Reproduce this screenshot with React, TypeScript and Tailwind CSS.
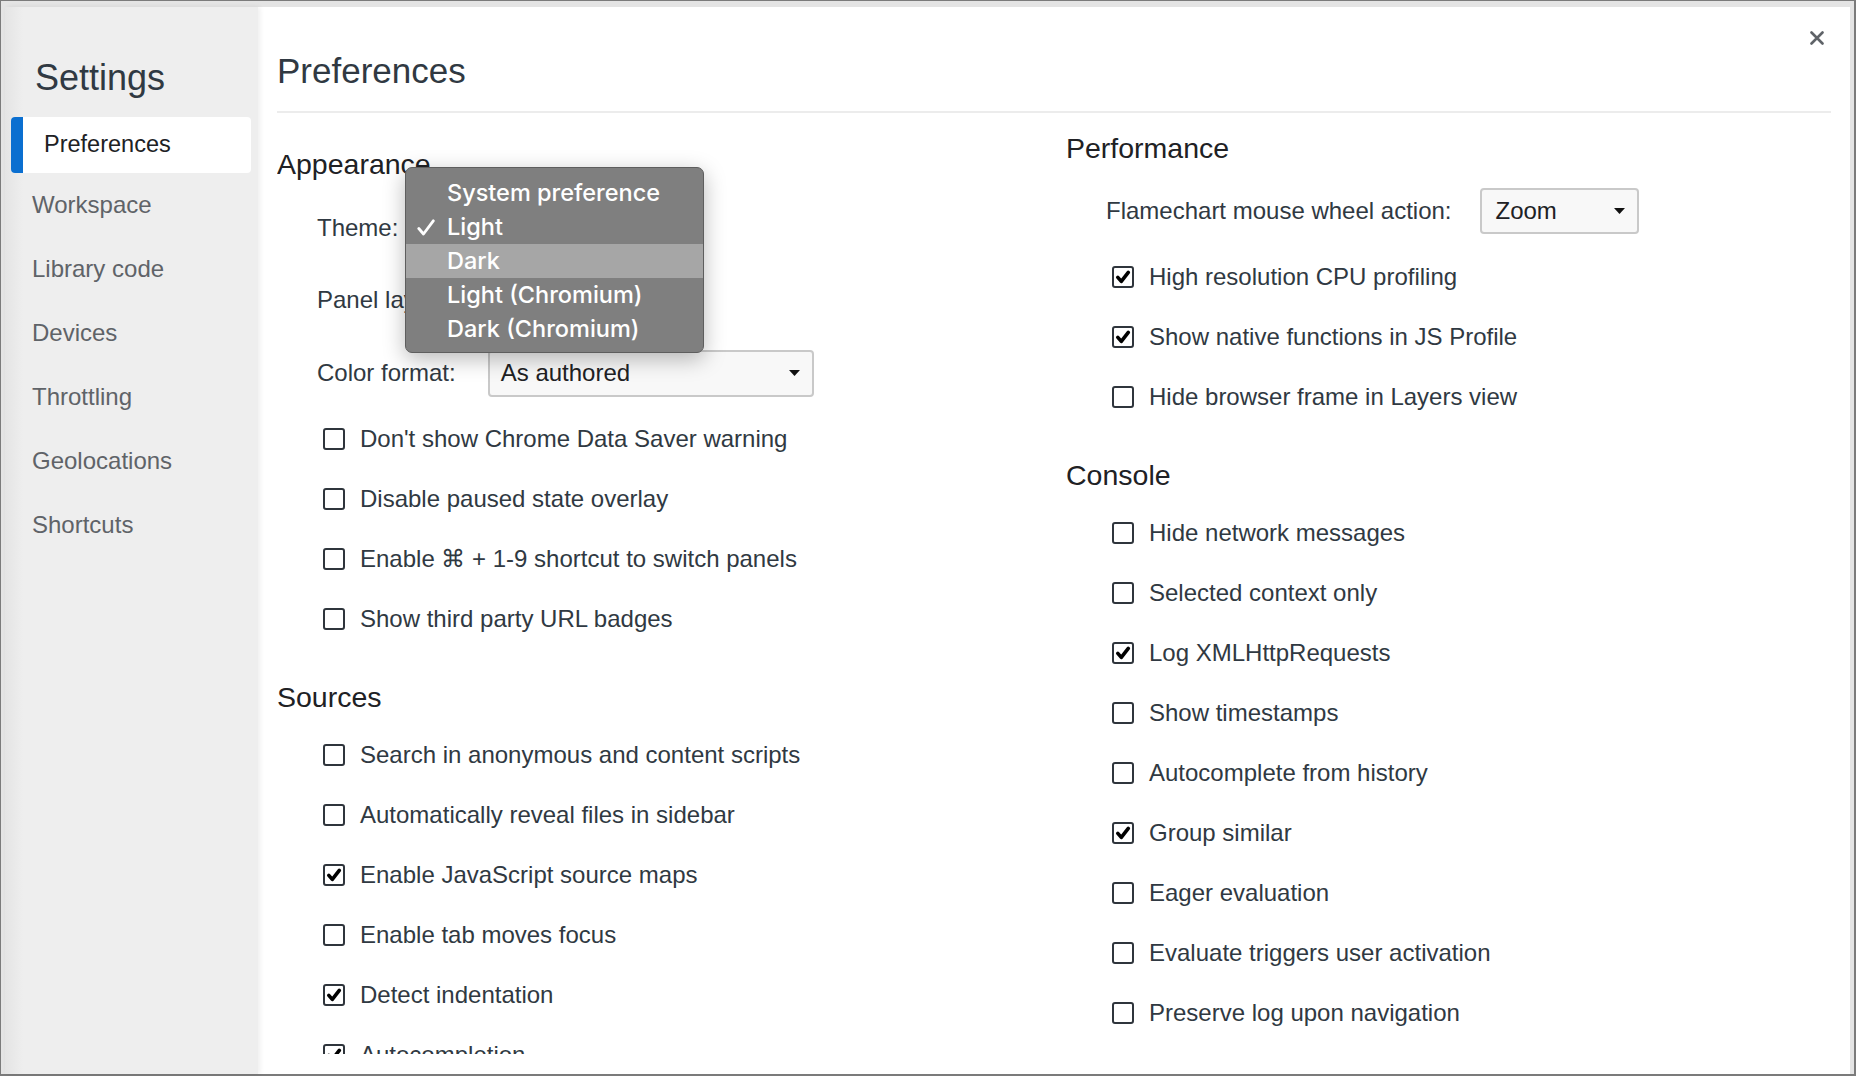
import React from "react";

function Box({ checked }: { checked?: boolean }) {
  return (
    <span className="flex h-[22px] w-[22px] shrink-0 items-center justify-center rounded-[3px] border-2 border-[#2f353c] bg-white">
      {checked && (
        <svg width="16" height="16" viewBox="0 0 16 16">
          <path
            d="M2.8 8.4 L6.3 12.4 L13.3 3.4"
            fill="none"
            stroke="#000"
            strokeWidth="3.6"
            strokeLinecap="round"
            strokeLinejoin="round"
          />
        </svg>
      )}
    </span>
  );
}

function CheckRow({ label, checked }: { label: string; checked?: boolean }) {
  return (
    <div className="flex h-[60px] items-center pl-[46px]">
      <Box checked={checked} />
      <span className="ml-[15px] whitespace-nowrap text-[24px] leading-none text-[#303942]">{label}</span>
    </div>
  );
}

function Arrow() {
  return (
    <svg width="11" height="6" viewBox="0 0 11 6" className="absolute right-[12px] top-1/2 -translate-y-1/2">
      <path d="M0 0 H11 L5.5 6 Z" fill="#111" />
    </svg>
  );
}

function Heading({ children }: { children: React.ReactNode }) {
  return <div className="flex h-[40px] items-center text-[28.5px] leading-none text-[#202124]">{children}</div>;
}

const leftRows1: [string, boolean][] = [
  ["Don't show Chrome Data Saver warning", false],
  ["Disable paused state overlay", false],
  ["Enable \u2318 + 1-9 shortcut to switch panels", false],
  ["Show third party URL badges", false],
];

const sourcesRows: [string, boolean][] = [
  ["Search in anonymous and content scripts", false],
  ["Automatically reveal files in sidebar", false],
  ["Enable JavaScript source maps", true],
  ["Enable tab moves focus", false],
  ["Detect indentation", true],
  ["Autocompletion", true],
];

const perfRows: [string, boolean][] = [
  ["High resolution CPU profiling", true],
  ["Show native functions in JS Profile", true],
  ["Hide browser frame in Layers view", false],
];

const consoleRows: [string, boolean][] = [
  ["Hide network messages", false],
  ["Selected context only", false],
  ["Log XMLHttpRequests", true],
  ["Show timestamps", false],
  ["Autocomplete from history", false],
  ["Group similar", true],
  ["Eager evaluation", false],
  ["Evaluate triggers user activation", false],
  ["Preserve log upon navigation", false],
];

const navItems = ["Workspace", "Library code", "Devices", "Throttling", "Geolocations", "Shortcuts"];

const menuItems = ["System preference", "Light", "Dark", "Light (Chromium)", "Dark (Chromium)"];

export default function App() {
  return (
    <div className="h-[1076px] w-[1856px] overflow-hidden bg-[#7b7b7b] pb-[2px] pl-px pr-[2px] pt-px font-['Liberation_Sans',Arial,sans-serif]">
      <div className="h-full bg-[#e4e4e4] pl-[4px] pr-[4px] pt-[6px]">
        <div className="flex h-full bg-white">
          {/* Sidebar */}
          <aside className="relative z-10 w-[253px] shrink-0 bg-[linear-gradient(to_right,#e4e4e4,#eeeeee_18px)] pt-[47px] shadow-[2px_0_5px_rgba(0,0,0,0.07)]">
            <div className="flex h-[48px] items-center pl-[30px] text-[36px] leading-none text-[#303942]">Settings</div>
            <div className="ml-[6px] mr-[7px] mt-[15px] flex h-[56px] items-center overflow-hidden rounded-[4px] bg-white">
              <div className="h-full w-[12px] bg-[#0b6fd0]" />
              <span className="pl-[21px] text-[23.5px] leading-none text-[#202124]">Preferences</span>
            </div>
            {navItems.map((n) => (
              <div key={n} className="flex h-[64px] items-center pl-[27px] text-[24px] leading-none text-[#5f6368]">
                {n}
              </div>
            ))}
          </aside>

          {/* Main */}
          <main className="relative flex min-w-0 flex-1 flex-col pl-[19px] pr-[19px]">
            <button className="absolute right-[26px] top-[24px] h-[14px] w-[14px]">
              <svg width="14" height="14" viewBox="0 0 14 14">
                <path d="M1.5 1.5 L12.5 12.5 M12.5 1.5 L1.5 12.5" stroke="#5f6368" strokeWidth="2.6" strokeLinecap="round" />
              </svg>
            </button>
            <div className="mt-[39px] flex h-[48px] items-center text-[35px] leading-none text-[#303942]">Preferences</div>
            <div className="mt-[17px] h-[2px] bg-[#ececec]" />

            <div className="flex h-[941px] overflow-hidden">
              {/* Left column */}
              <div className="relative w-[789px] shrink-0">
                <div className="mt-[31px]">
                  <Heading>Appearance</Heading>
                </div>
                <div className="mt-[20px] flex h-[48px] items-center pl-[40px]">
                  <span className="text-[24px] leading-none text-[#303942]">Theme:</span>
                  <div className="ml-[12px] h-[47px] w-[200px] rounded-[4px] border-2 border-[#c9c9c9] bg-[#f8f8f8]" />
                </div>
                <div className="mt-[24px] flex h-[48px] items-center pl-[40px]">
                  <span className="text-[24px] leading-none text-[#303942]">Panel layout:</span>
                  <div className="ml-[12px] h-[47px] w-[200px] rounded-[4px] border-2 border-[#c9c9c9] bg-[#f8f8f8]" />
                </div>
                <div className="mt-[25px] flex h-[48px] items-center pl-[40px]">
                  <span className="text-[24px] leading-none text-[#303942]">Color format:</span>
                  <div className="relative ml-[32px] flex h-[47px] w-[326px] items-center rounded-[4px] border-2 border-[#c9c9c9] bg-[#f8f8f8] pl-[11px] text-[24px] leading-none text-[#202124]">
                    As authored
                    <Arrow />
                  </div>
                </div>
                <div className="mt-[12px]">
                  {leftRows1.map(([l, c]) => (
                    <CheckRow key={l} label={l} checked={c} />
                  ))}
                </div>
                <div className="mt-[28px]">
                  <Heading>Sources</Heading>
                </div>
                <div className="mt-[8px]">
                  {sourcesRows.map(([l, c]) => (
                    <CheckRow key={l} label={l} checked={c} />
                  ))}
                </div>

                {/* Open theme menu */}
                <div className="absolute left-[128px] top-[54px] z-20 w-[299px] rounded-[7px] border border-[#5e5e5e] bg-[#7f7f7f] pb-[6px] pt-[8px] font-['Inter',sans-serif] text-[23.5px] font-medium leading-none text-white shadow-[0_6px_22px_rgba(0,0,0,0.28)]">
                  {menuItems.map((m) => (
                    <div
                      key={m}
                      className={m === "Dark" ? "relative flex h-[34px] items-center bg-[#a6a6a6] pl-[41px]" : "relative flex h-[34px] items-center pl-[41px]"}
                    >
                      {m === "Light" && (
                        <svg width="18" height="17" viewBox="0 0 18 17" className="absolute left-[11px] top-[9px]">
                          <path d="M1.8 9.5 L6.5 15 L16.3 1.8" fill="none" stroke="#fff" strokeWidth="2.8" strokeLinecap="round" strokeLinejoin="round" />
                        </svg>
                      )}
                      {m}
                    </div>
                  ))}
                </div>
              </div>

              {/* Right column */}
              <div className="min-w-0 flex-1">
                <div className="mt-[15px]">
                  <Heading>Performance</Heading>
                </div>
                <div className="mt-[19px] flex h-[48px] items-center pl-[40px]">
                  <span className="whitespace-nowrap text-[24px] leading-none text-[#303942]">Flamechart mouse wheel action:</span>
                  <div className="relative ml-[28px] flex h-[46px] w-[159px] items-center rounded-[4px] border-2 border-[#c9c9c9] bg-[#f8f8f8] pl-[14px] text-[24px] leading-none text-[#202124]">
                    Zoom
                    <Arrow />
                  </div>
                </div>
                <div className="mt-[12px]">
                  {perfRows.map(([l, c]) => (
                    <CheckRow key={l} label={l} checked={c} />
                  ))}
                </div>
                <div className="mt-[28px]">
                  <Heading>Console</Heading>
                </div>
                <div className="mt-[8px]">
                  {consoleRows.map(([l, c]) => (
                    <CheckRow key={l} label={l} checked={c} />
                  ))}
                </div>
              </div>
            </div>
          </main>
        </div>
      </div>
    </div>
  );
}
